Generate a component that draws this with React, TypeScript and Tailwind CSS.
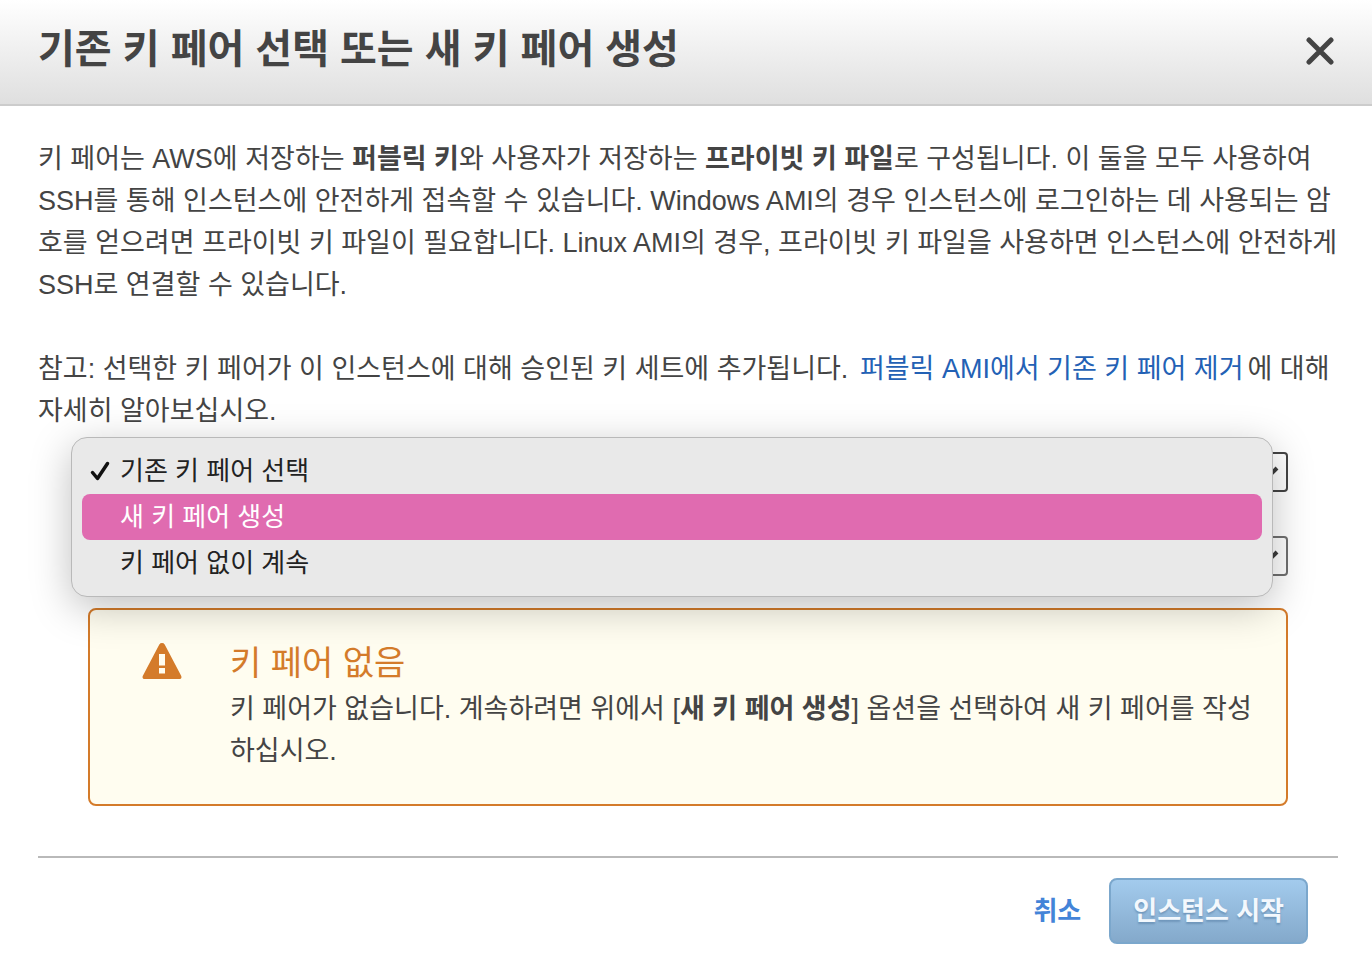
import React, { useState } from 'react';

interface KeyPairOption {
  value: string;
  label: string;
}

const options: KeyPairOption[] = [
  { value: 'existing', label: '기존 키 페어 선택' },
  { value: 'new', label: '새 키 페어 생성' },
  { value: 'none', label: '키 페어 없이 계속' },
];

const ChevronIcon: React.FC = () => (
  <svg className="absolute right-2 top-3 w-6 h-4 pointer-events-none" viewBox="0 0 24 16" fill="none">
    <path d="M3 4l9 9 9-9" stroke="#3b3b3b" strokeWidth="4" />
  </svg>
);

const WarningIcon: React.FC = () => (
  <svg className="w-10 h-9 mt-px shrink-0" viewBox="0 0 40 36">
    <path
      d="M17.3 1.6a3.2 3.2 0 015.4 0L39 32.600c1 1.800.3 3.400-1.600 3.400H2.600c-1.900 0-2.600-1.600-1.600-3.400z"
      fill="#d47b2a"
    />
    <path d="M17 11h6v11.500h-6zM17 25h6v5.500h-6z" fill="#fffdf0" />
  </svg>
);

interface SelectFieldProps {
  label: string;
  borderClass: string;
  children?: React.ReactNode;
}

const SelectField: React.FC<SelectFieldProps> = ({ label, borderClass, children }) => (
  <div className="relative">
    <select aria-label={label} className={`block w-full h-10 px-3 text-lg appearance-none bg-white border-2 rounded-sm ${borderClass}`}>
      {children}
    </select>
    <ChevronIcon />
  </div>
);

const App: React.FC = () => {
  const [selected, setSelected] = useState('existing');
  const [active, setActive] = useState('new');

  return (
    <div className="min-h-screen bg-white text-[#444] font-['Liberation_Sans','Noto_Sans_CJK_KR',sans-serif]">
      {/* Header */}
      <header className="flex items-center justify-between h-[106px] px-[38px] pb-1.5 border-b-2 border-[#ccc] bg-linear-to-b from-white to-[#dfdfdf]">
        <h1 className="text-[40px] leading-[48px] font-bold">기존 키 페어 선택 또는 새 키 페어 생성</h1>
        <button type="button" aria-label="닫기" className="pt-1">
          <svg className="w-7 h-7" viewBox="0 0 28 28" fill="none">
            <path d="M3 3l22 22M25 3L3 25" stroke="#444" strokeWidth="5" strokeLinecap="round" />
          </svg>
        </button>
      </header>

      <main className="pl-[38px] pr-[34px] pt-8 text-[27px] leading-[42px]">
        <p>
          키 페어는 AWS에 저장하는 <b>퍼블릭 키</b>와 사용자가 저장하는 <b>프라이빗 키 파일</b>로 구성됩니다. 이 둘을 모두 사용하여
          SSH를 통해 인스턴스에 안전하게 접속할 수 있습니다. Windows AMI의 경우 인스턴스에 로그인하는 데 사용되는 암호를 얻으려면
          프라이빗 키 파일이 필요합니다. Linux AMI의 경우, 프라이빗 키 파일을 사용하면 인스턴스에 안전하게 SSH로 연결할 수 있습니다.
        </p>
        <p className="mt-[42px]">
          참고: 선택한 키 페어가 이 인스턴스에 대해 승인된 키 세트에 추가됩니다.{' '}
          <a href="#remove" className="mx-1 text-[#2361b5]">퍼블릭 AMI에서 기존 키 페어 제거</a>에 대해 자세히 알아보십시오.
        </p>

        <div className="relative mt-5 mx-[50px] flex flex-col gap-11">
          <SelectField label="키 페어 옵션" borderClass="border-[#444]">
            {options.map(option => (
              <option key={option.value} value={option.value}>{option.label}</option>
            ))}
          </SelectField>
          <SelectField label="키 페어 선택" borderClass="border-[#707070]" />

          {/* Open menu */}
          <ul
            role="listbox"
            aria-label="키 페어 옵션"
            className="absolute -top-[15px] -left-[17px] right-[15px] p-2.5 rounded-2xl border border-[#b9b9b9] bg-[#e9e9e9] text-[26px] leading-[46px] text-[#222] shadow-[0_10px_40px_rgba(0,0,0,0.25)]"
          >
            {options.map(option => (
              <li
                key={option.value}
                role="option"
                aria-selected={option.value === selected}
                onMouseEnter={() => setActive(option.value)}
                onClick={() => setSelected(option.value)}
                className={`flex items-center h-[46px] rounded-lg ${option.value === active ? 'bg-[#e06bb0] text-white' : ''}`}
              >
                <span className="w-[38px] pl-2">
                  {option.value === selected && (
                    <svg className="w-5 h-5" viewBox="0 0 20 20" fill="none">
                      <path d="M2.500 11.500l5 6L17.500 2.500" stroke="#111" strokeWidth="3.500" strokeLinecap="round" strokeLinejoin="round" />
                    </svg>
                  )}
                </span>
                {option.label}
              </li>
            ))}
          </ul>
        </div>

        {/* Warning */}
        <section className="flex mt-8 mx-[50px] pl-[52px] pr-8 py-8 border-2 border-[#d47b2a] rounded-lg bg-[#fffdf0]">
          <WarningIcon />
          <div className="ml-12">
            <h2 className="mb-1 text-[34px] leading-[42px] text-[#d47b2a]">키 페어 없음</h2>
            <p>
              키 페어가 없습니다. 계속하려면 위에서 [<b>새 키 페어 생성</b>] 옵션을 선택하여 새 키 페어를 작성하십시오.
            </p>
          </div>
        </section>

        <footer className="flex items-center justify-end gap-7 mt-[50px] pt-5 pr-[30px] border-t-2 border-[#b9b9b9] text-[26px] font-bold">
          <a href="#cancel" className="text-[#4384d8]">취소</a>
          <button
            type="button"
            className="h-[66px] px-[22px] rounded-lg border-2 border-[#7ba7cc] bg-linear-to-b from-[#a3cbed] to-[#84a9cb] text-[#f3f8fd] [text-shadow:0_2px_2px_rgba(60,100,140,0.4)]"
          >
            인스턴스 시작
          </button>
        </footer>
      </main>
    </div>
  );
};

export default App;
